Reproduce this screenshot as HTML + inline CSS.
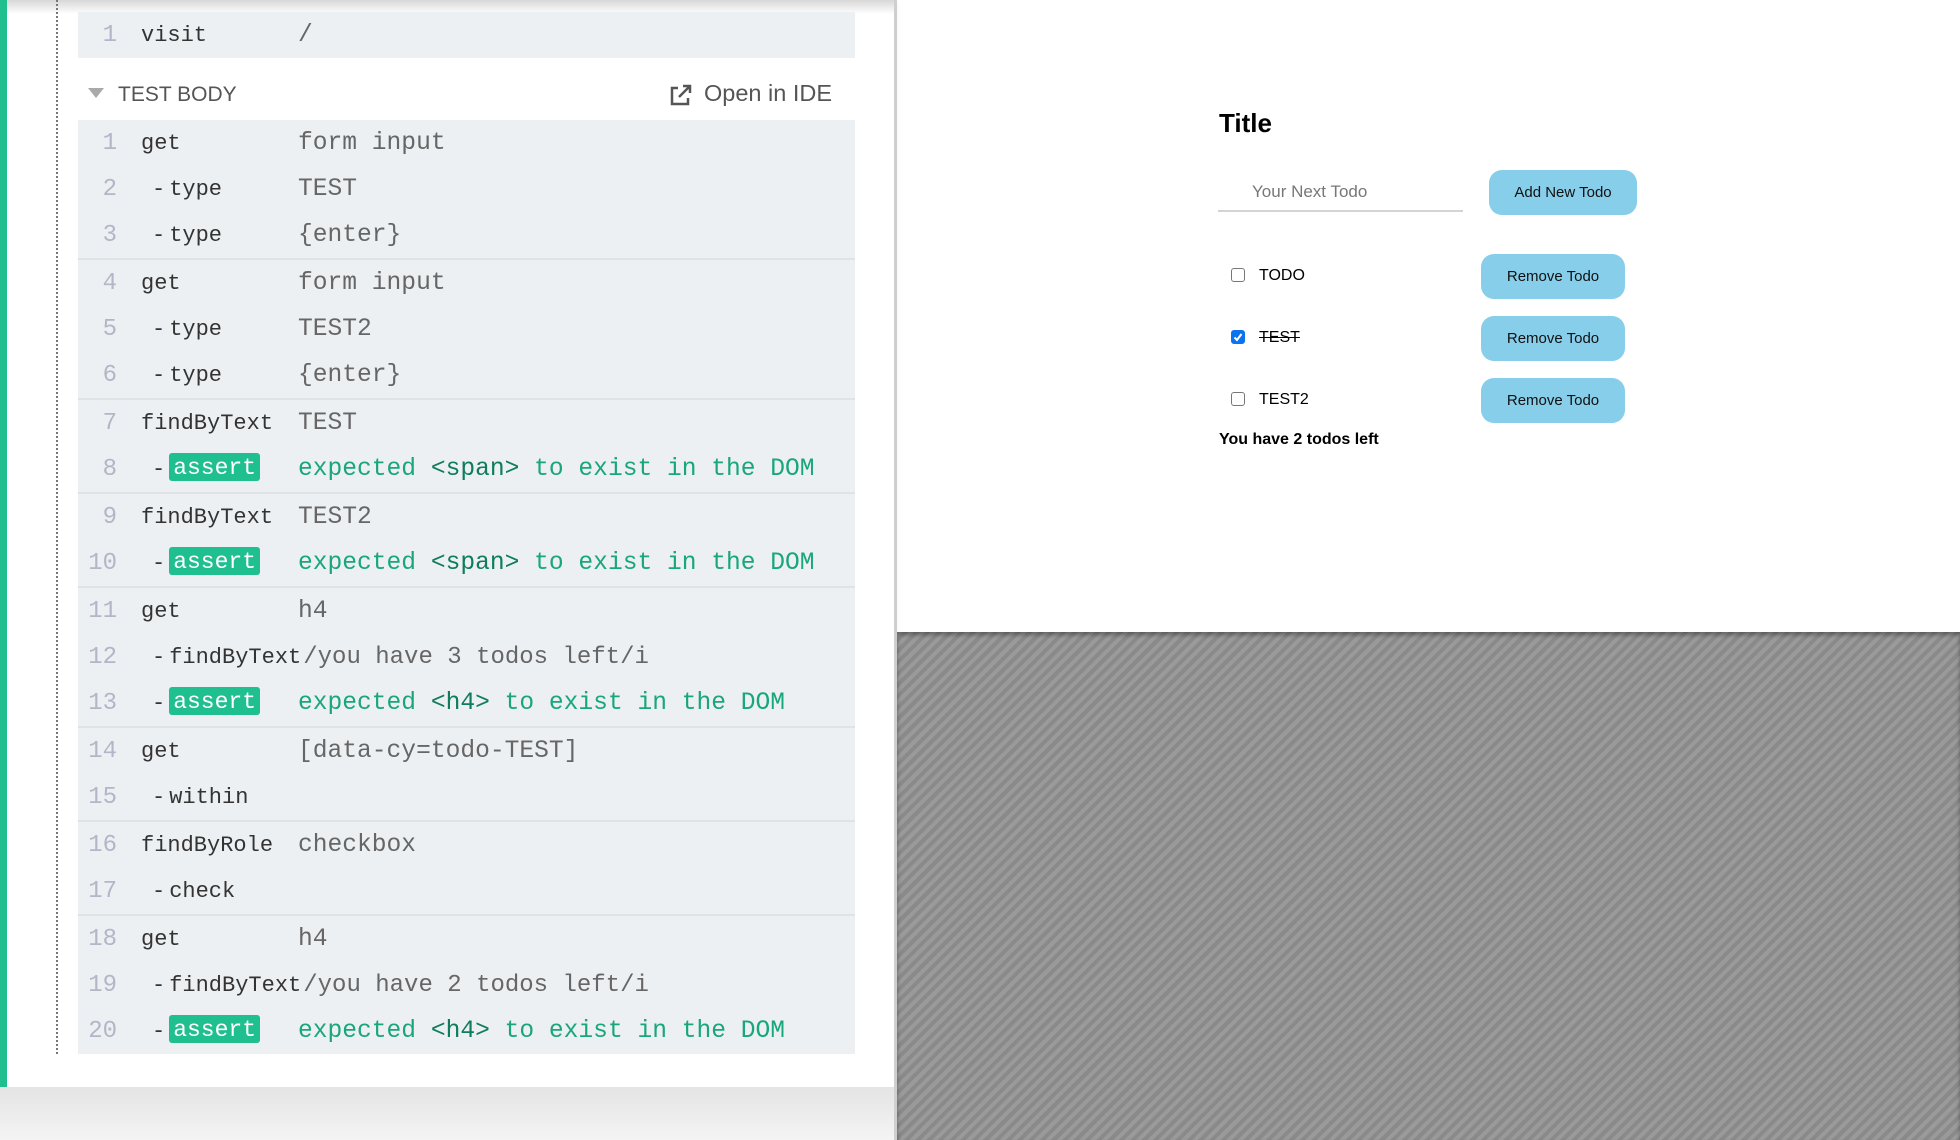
<!DOCTYPE html>
<html><head><meta charset="utf-8"><style>
*{margin:0;padding:0;box-sizing:border-box}
body{width:1960px;height:1140px;position:relative;overflow:hidden;background:#fff;font-family:"Liberation Sans",sans-serif}
#left{position:absolute;left:0;top:0;width:895px;height:1087px;background:#fff;box-shadow:0 2px 4px rgba(0,0,0,.25)}
#topsh{position:absolute;left:0;top:0;width:895px;height:14px;background:linear-gradient(#d8d8d8,rgba(255,255,255,0))}
#green{position:absolute;left:0;top:0;width:7px;height:1087px;background:#1fbf8f}
#dots{position:absolute;left:56px;top:0;height:1054px;border-left:2px dotted #777}
#bottom{position:absolute;left:0;top:1087px;width:895px;height:53px;background:linear-gradient(#e4e4e4,#f4f4f4)}
#div{position:absolute;left:894px;top:0;width:3px;height:1140px;background:#cfcfcf}
.blk{position:absolute;left:78px;width:777px;background:#edf0f3}
.row{height:46px;position:relative;font-family:"Liberation Mono",monospace;font-size:22px;line-height:48px;white-space:nowrap}
.sep{height:2px;background:#e0e3e6}
.n{position:absolute;right:738px;color:#b2b6c6;text-align:right;font-size:24px}
.c{position:absolute;left:63px;color:#333}
.s{position:absolute;left:74px;color:#333}
.s i{font-style:normal;margin-left:4px}
.v{position:absolute;left:220px;color:#666;font-size:24.6px}
.vv{color:#666;font-size:24px;margin-left:2px}
.badge{display:inline-block;background:#1fbf8f;color:#fff;border-radius:3px;height:28px;line-height:30px;padding:0 4px;vertical-align:middle;margin-left:4px;position:relative;top:-2px;font-size:23px}
.g{color:#1aa67b}.g b{color:#0f7c5a;font-weight:normal}
#hdr{position:absolute;left:88px;top:83px;font-size:21px;color:#555}
#stripes{position:absolute;left:897px;top:632px;width:1063px;height:508px;background:repeating-linear-gradient(135deg,#9a9a9a 0 4px,#8a8a8a 4px 8px);box-shadow:inset 0 3px 4px rgba(0,0,0,.35)}
.btn{position:absolute;background:#87ceeb;border-radius:13px;font-size:15px;color:#111;text-align:center}
.cb{position:absolute;left:1231px;width:14px;height:14px;border:1px solid #777;border-radius:3px;background:#fff}
.lab{position:absolute;left:1259px;font-size:16px;color:#000}
</style></head><body>
<div id="left">
<div id="topsh"></div>
<div id="green"></div>
<div id="dots"></div>
<div class="blk" style="top:12px;height:46px"><div class="row"><span class="n">1</span><span class="c">visit</span><span class="v">/</span></div></div>
<div id="hdr"><span style="display:inline-block;width:0;height:0;border-left:8px solid transparent;border-right:8px solid transparent;border-top:10px solid #aaa;margin-right:14px;vertical-align:3px"></span>TEST BODY</div>
<svg style="position:absolute;left:669px;top:84px" width="24" height="22" viewBox="0 0 24 22"><path d="M9 4H3v16h16v-6" fill="none" stroke="#555" stroke-width="2.5"/><path d="M10 13L21 2M14 2h7v7" fill="none" stroke="#555" stroke-width="2.5"/></svg>
<div style="position:absolute;left:704px;top:80px;font-size:23.5px;color:#555">Open in IDE</div>
<div class="blk" style="top:120px">
<div class="row"><span class="n">1</span><span class="c">get</span><span class="v">form input</span></div>
<div class="row"><span class="n">2</span><span class="s">-<i>type</i></span><span class="v">TEST</span></div>
<div class="row"><span class="n">3</span><span class="s">-<i>type</i></span><span class="v">{enter}</span></div>
<div class="sep"></div>
<div class="row"><span class="n">4</span><span class="c">get</span><span class="v">form input</span></div>
<div class="row"><span class="n">5</span><span class="s">-<i>type</i></span><span class="v">TEST2</span></div>
<div class="row"><span class="n">6</span><span class="s">-<i>type</i></span><span class="v">{enter}</span></div>
<div class="sep"></div>
<div class="row"><span class="n">7</span><span class="c">findByText</span><span class="v">TEST</span></div>
<div class="row"><span class="n">8</span><span class="s">-<span class="badge">assert</span></span><span class="v g">expected <b>&lt;span&gt;</b> to exist in the DOM</span></div>
<div class="sep"></div>
<div class="row"><span class="n">9</span><span class="c">findByText</span><span class="v">TEST2</span></div>
<div class="row"><span class="n">10</span><span class="s">-<span class="badge">assert</span></span><span class="v g">expected <b>&lt;span&gt;</b> to exist in the DOM</span></div>
<div class="sep"></div>
<div class="row"><span class="n">11</span><span class="c">get</span><span class="v">h4</span></div>
<div class="row"><span class="n">12</span><span class="s">-<i>findByText</i><span class="vv">/you have 3 todos left/i</span></span></div>
<div class="row"><span class="n">13</span><span class="s">-<span class="badge">assert</span></span><span class="v g">expected <b>&lt;h4&gt;</b> to exist in the DOM</span></div>
<div class="sep"></div>
<div class="row"><span class="n">14</span><span class="c">get</span><span class="v">[data-cy=todo-TEST]</span></div>
<div class="row"><span class="n">15</span><span class="s">-<i>within</i></span></div>
<div class="sep"></div>
<div class="row"><span class="n">16</span><span class="c">findByRole</span><span class="v">checkbox</span></div>
<div class="row"><span class="n">17</span><span class="s">-<i>check</i></span></div>
<div class="sep"></div>
<div class="row"><span class="n">18</span><span class="c">get</span><span class="v">h4</span></div>
<div class="row"><span class="n">19</span><span class="s">-<i>findByText</i><span class="vv">/you have 2 todos left/i</span></span></div>
<div class="row"><span class="n">20</span><span class="s">-<span class="badge">assert</span></span><span class="v g">expected <b>&lt;h4&gt;</b> to exist in the DOM</span></div>
</div>
</div>
<div id="bottom"></div>
<div id="div"></div>
<div id="stripes"></div>

<div style="position:absolute;left:1219px;top:108px;font-size:26px;font-weight:bold;color:#000">Title</div>
<div style="position:absolute;left:1252px;top:182px;font-size:17px;color:#777">Your Next Todo</div>
<div style="position:absolute;left:1218px;top:210px;width:245px;height:2px;background:#d4d4d4"></div>
<div class="btn" style="left:1489px;top:170px;width:148px;height:45px;line-height:46px">Add New Todo</div>

<div class="cb" style="top:268px"></div><div class="lab" style="top:267px">TODO</div>
<div class="btn" style="left:1481px;top:254px;width:144px;height:45px;line-height:46px">Remove Todo</div>
<div class="cb" style="top:330px;background:#0a74f0;border-color:#0a74f0"><svg width="12" height="12" viewBox="0 0 12 12" style="position:absolute;left:0;top:0"><path d="M2.5 6.5l2.5 2.5 4.5-6" fill="none" stroke="#fff" stroke-width="2"/></svg></div>
<div class="lab" style="top:329px;text-decoration:line-through">TEST</div>
<div class="btn" style="left:1481px;top:316px;width:144px;height:45px;line-height:46px">Remove Todo</div>
<div class="cb" style="top:392px"></div><div class="lab" style="top:391px">TEST2</div>
<div class="btn" style="left:1481px;top:378px;width:144px;height:45px;line-height:46px">Remove Todo</div>
<div style="position:absolute;left:1219px;top:431px;font-size:16px;font-weight:bold;color:#000">You have 2 todos left</div>
</body></html>
